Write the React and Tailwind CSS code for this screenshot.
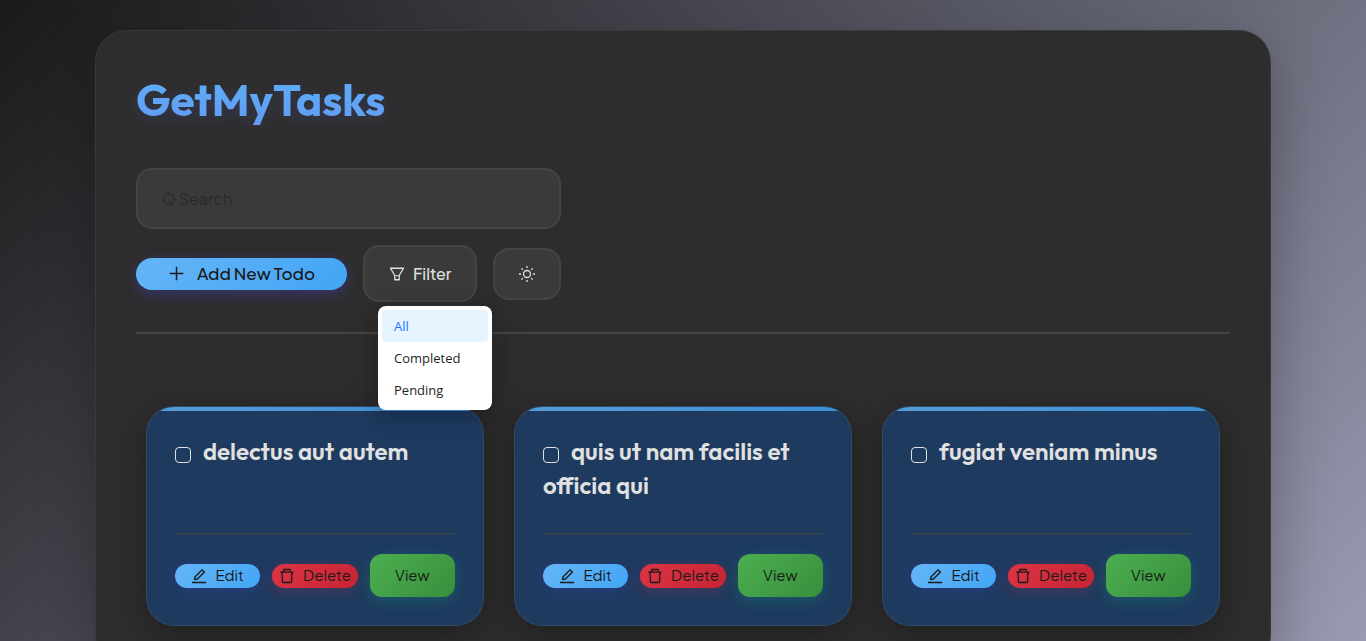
import { useState } from "react";
import { AiOutlinePlus, AiOutlineFilter, AiOutlineEdit, AiOutlineDelete } from "react-icons/ai";

const FILTERS = ["All", "Completed", "Pending"];

const TODOS = [
  { id: 1, title: "delectus aut autem" },
  { id: 2, title: "quis ut nam facilis et officia qui" },
  { id: 3, title: "fugiat veniam minus" },
];

// Trims the empty margin around the Ant glyphs.
const GLYPH_BOX = "64 64 896 896";

function SunIcon() {
  return (
    <svg viewBox="0 0 16 16" className="size-4" fill="none" stroke="currentColor" strokeWidth="1.3" aria-hidden="true">
      <circle cx="8" cy="8" r="3.5" />
      <path d="M8 0v2M8 14v2M0 8h2M14 8h2M2.4 2.4l1.4 1.4M12.2 12.2l1.4 1.4M2.4 13.6l1.4-1.4M12.2 3.8l1.4-1.4" />
    </svg>
  );
}

function FilterMenu({ active, onSelect }) {
  return (
    <ul className="absolute left-[15px] top-full z-10 mt-1 w-[114px] rounded-lg bg-white p-1 font-['Segoe_UI','Open_Sans',sans-serif] text-[13px] shadow-[0_6px_16px_rgba(0,0,0,0.12),0_9px_28px_8px_rgba(0,0,0,0.08)]">
      {FILTERS.map((name) => (
        <li key={name}>
          <button
            type="button"
            onClick={() => onSelect(name)}
            className={
              name === active
                ? "block h-8 w-full rounded bg-[#e6f4ff] px-3 pt-0.5 text-left text-[#1677ff]"
                : "block h-8 w-full rounded px-3 pt-0.5 text-left text-[#1f1f1f]"
            }
          >
            {name}
          </button>
        </li>
      ))}
    </ul>
  );
}

function TodoCard({ title }) {
  const [done, setDone] = useState(false);
  return (
    <article className="relative flex flex-col overflow-hidden rounded-[28px] border border-white/8 bg-[#1e3a5f] px-7 pt-[27px] pb-7 shadow-[0_8px_32px_rgba(0,0,0,0.3)]">
      <div className="absolute inset-x-0 top-0 h-1 bg-linear-135 from-[#64b5f6] to-[#42a5f5] opacity-80" />
      <h2 className="mb-[31px] min-h-[68px] flex-1 font-['Outfit',Lato,sans-serif] text-2xl leading-[34px] font-semibold text-[#e0e0e0]">
        <label>
          <input
            type="checkbox"
            checked={done}
            onChange={(e) => setDone(e.target.checked)}
            className="mr-3 inline-block size-4 appearance-none rounded border border-[#e0e0e0] align-[-3px] checked:bg-[#42a5f5]"
          />
          {title}
        </label>
      </h2>
      <div className="flex items-center gap-3 border-t border-[#444444] pt-5 text-[15px] text-[#1a1a1a]">
        <button type="button" className="flex h-6 min-w-0 flex-1 items-center justify-center gap-2 rounded-full bg-linear-135 from-[#64b5f6] to-[#42a5f5] shadow-[0_4px_16px_rgba(79,70,229,0.2)]">
          <AiOutlineEdit viewBox={GLYPH_BOX} className="size-4 shrink-0" />
          Edit
        </button>
        <button type="button" className="flex h-6 min-w-0 flex-1 items-center justify-center gap-2 rounded-full bg-linear-135 from-[#dc3545] to-[#c82333] shadow-[0_4px_16px_rgba(220,53,69,0.2)]">
          <AiOutlineDelete viewBox={GLYPH_BOX} className="size-4 shrink-0" />
          Delete
        </button>
        <button type="button" className="h-[43px] min-w-0 flex-1 rounded-xl bg-linear-135 from-[#4caf50] to-[#388e3c] shadow-[0_4px_16px_rgba(16,185,129,0.25)]">
          View
        </button>
      </div>
    </article>
  );
}

export default function App() {
  const [filter, setFilter] = useState("All");
  const [open, setOpen] = useState(true);
  return (
    <div className="h-screen overflow-y-auto bg-linear-135 from-[#1a1a1a] via-[#5a5b68] to-[#9a9ab2] p-[30px] font-['Plus_Jakarta_Sans',Lato,sans-serif] [scrollbar-width:none]">
      <main className="mx-auto max-w-[1176px] rounded-[32px] border border-white/6 bg-[#2d2d2d] p-10 shadow-[0_20px_60px_rgba(0,0,0,0.3)]">
        <header className="border-b-2 border-[#444444] pb-[30px]">
          <h1 className="w-fit bg-linear-to-b from-[#5cb0f8] to-[#629af2] bg-clip-text font-['Outfit',Lato,sans-serif] text-[44px] leading-[58px] font-bold text-transparent drop-shadow-[0_4px_8px_rgba(99,102,241,0.2)]">
            GetMyTasks
          </h1>
          <div className="mt-[39px] flex w-fit flex-col gap-4">
            <input
              type="text"
              aria-label="Search"
              placeholder="Q Search"
              className="h-[61px] w-full rounded-2xl border-2 border-[#444444] bg-[#3a3a3a] px-6 text-base text-[#e0e0e0] outline-none placeholder:text-[#2a2a2a]"
            />
            <div className="flex items-center gap-4">
              <button type="button" className="flex h-8 items-center gap-3 rounded-full bg-linear-135 from-[#64b5f6] to-[#42a5f5] px-8 text-[17px] font-medium text-[#1a1a1a] shadow-[0_4px_16px_rgba(79,70,229,0.35)]">
                <AiOutlinePlus viewBox={GLYPH_BOX} className="size-[17px]" />
                Add New Todo
              </button>
              <div className="relative">
                <button
                  type="button"
                  aria-expanded={open}
                  onClick={() => setOpen(!open)}
                  className="flex h-[57px] items-center gap-2 rounded-2xl border-2 border-[#444444] bg-[#3a3a3a] px-6 text-base font-medium text-[#e0e0e0]"
                >
                  <AiOutlineFilter viewBox={GLYPH_BOX} className="size-4" />
                  Filter
                </button>
                {open && <FilterMenu active={filter} onSelect={setFilter} />}
              </div>
              <button type="button" aria-label="Toggle theme" className="flex h-[52px] items-center rounded-2xl border-2 border-[#444444] bg-[#3a3a3a] px-6 text-[#e0e0e0]">
                <SunIcon />
              </button>
            </div>
          </div>
        </header>
        <section aria-label="Todos" className="mt-[72px] grid grid-cols-3 gap-[30px] px-[10px]">
          {TODOS.map((todo) => (
            <TodoCard key={todo.id} title={todo.title} />
          ))}
        </section>
      </main>
    </div>
  );
}
